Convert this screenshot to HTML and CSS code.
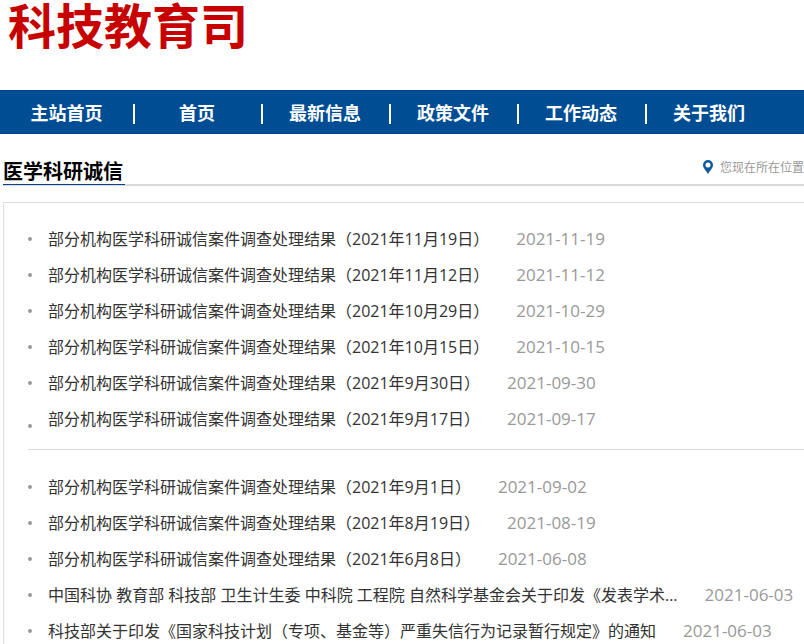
FILE: index.html
```html
<!DOCTYPE html>
<html lang="zh-CN">
<head>
  <meta charset="UTF-8" />
  <meta name="viewport" content="width=device-width, initial-scale=1" />
  <title>医学科研诚信</title>
  <link rel="stylesheet" href="styles.css">
</head>
<body>
  <header class="header">
    <h1 class="logo">科技教育司</h1>
  </header>

  <nav class="nav">
    <a href="#">主站首页</a>
    <a href="#">首页</a>
    <a href="#">最新信息</a>
    <a href="#">政策文件</a>
    <a href="#">工作动态</a>
    <a href="#">关于我们</a>
  </nav>

  <main class="main">
    <div class="title-bar">
      <h2>医学科研诚信</h2>
      <div class="position">
        <svg class="pin" viewBox="0 0 10 14" aria-hidden="true"><path fill-rule="evenodd" d="M5 0a5 5 0 0 0-5 5c0 3 3 5.500 5 9 2-3.500 5-6 5-9a5 5 0 0 0-5-5zm0 2.500a2.500 2.500 0 1 1 0 5 2.500 2.500 0 0 1 0-5z"/></svg>
        <span>您现在所在位置</span>
      </div>
    </div>

    <div class="list">
      <ul>
        <li><a href="#">部分机构医学科研诚信案件调查处理结果（2021年11月19日）</a><span class="date">2021-11-19</span></li>
        <li><a href="#">部分机构医学科研诚信案件调查处理结果（2021年11月12日）</a><span class="date">2021-11-12</span></li>
        <li><a href="#">部分机构医学科研诚信案件调查处理结果（2021年10月29日）</a><span class="date">2021-10-29</span></li>
        <li><a href="#">部分机构医学科研诚信案件调查处理结果（2021年10月15日）</a><span class="date">2021-10-15</span></li>
        <li><a href="#">部分机构医学科研诚信案件调查处理结果（2021年9月30日）</a><span class="date">2021-09-30</span></li>
        <li class="line"><a href="#">部分机构医学科研诚信案件调查处理结果（2021年9月17日）</a><span class="date">2021-09-17</span></li>
        <li><a href="#">部分机构医学科研诚信案件调查处理结果（2021年9月1日）</a><span class="date">2021-09-02</span></li>
        <li><a href="#">部分机构医学科研诚信案件调查处理结果（2021年8月19日）</a><span class="date">2021-08-19</span></li>
        <li><a href="#">部分机构医学科研诚信案件调查处理结果（2021年6月8日）</a><span class="date">2021-06-08</span></li>
        <li><a href="#">中国科协 教育部 科技部 卫生计生委 中科院 工程院 自然科学基金会关于印发《发表学术...</a><span class="date">2021-06-03</span></li>
        <li><a href="#">科技部关于印发《国家科技计划（专项、基金等）严重失信行为记录暂行规定》的通知</a><span class="date">2021-06-03</span></li>
      </ul>
    </div>
  </main>
</body>
</html>
```

FILE: styles.css
```css
* {
  box-sizing: border-box;
}
body {
  margin: 0;
  background: #fff;
  font-family: "Open Sans", "Noto Sans CJK SC", sans-serif;
  font-size: 16px;
  color: #333;
}
a {
  color: inherit;
  text-decoration: none;
}
h1,
h2,
ul {
  margin: 0;
  padding: 0;
}
.header {
  height: 90px;
  padding-left: 8px;
}
.logo {
  font-size: 48px;
  line-height: 52px;
  font-weight: bold;
  color: #c70000;
}
.nav {
  display: flex;
  height: 44px;
  background: #004d94;
  border-top: 1px solid #00448a;
  border-bottom: 1px solid #00448a;
}
.nav a {
  position: relative;
  width: 128px;
  line-height: 44px;
  text-align: center;
  font-size: 18px;
  font-weight: bold;
  color: #fff;
}
.nav a:first-child {
  width: 133px;
}
.nav a + a::before {
  content: "";
  position: absolute;
  left: 0;
  top: 13px;
  width: 2px;
  height: 20px;
  background: #fff;
}
.main {
  padding: 22px 0 0 3px;
}
.title-bar {
  display: flex;
  justify-content: space-between;
  height: 30px;
  border-bottom: 2px solid #d9d9d9;
}
.title-bar h2 {
  height: 29px;
  padding-right: 2px;
  line-height: 32px;
  font-size: 20px;
  color: #000;
  border-bottom: 1px solid #004094;
}
.position {
  display: flex;
  align-items: center;
  gap: 7px;
  height: 22px;
  font-size: 12px;
  color: #999;
}
.pin {
  width: 10px;
  height: 14px;
  fill: #0e5a9c;
}
.list {
  margin-top: 16px;
  padding: 18px 0 0 24px;
  border: 1px solid #ddd;
  border-right: 0;
  border-bottom: 0;
  overflow: hidden;
}
.list ul {
  list-style: none;
}
.list li {
  display: flex;
  align-items: center;
  height: 36px;
  line-height: 34px;
  white-space: nowrap;
}
.list li::before {
  content: "";
  width: 4px;
  height: 4px;
  margin-right: 16px;
  border-radius: 50%;
  background: #999;
}
.list .line {
  align-items: flex-start;
  height: 49px;
  margin-bottom: 19px;
  padding-top: 1px;
  border-bottom: 1px solid #ddd;
}
.list .line::before {
  align-self: center;
}
.date {
  margin-left: 27px;
  font-size: 17px;
  color: #999;
}
/* the page scrolls without a visible bar */
html {
  scrollbar-width: none;
}
```
